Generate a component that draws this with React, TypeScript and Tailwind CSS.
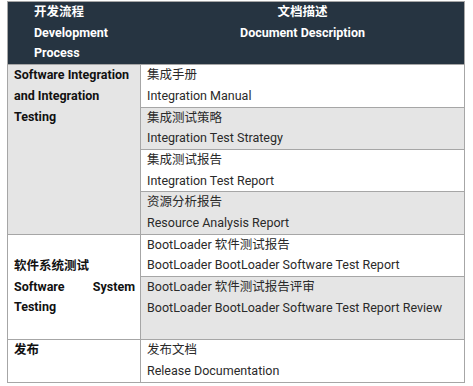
import React from 'react'

const font = { fontFamily: 'Roboto, "Noto Sans CJK SC", sans-serif' }

type Item = { zh: string; en: string; gray?: boolean; extra?: boolean }

function Sub({ item, first }: { item: Item; first: boolean }) {
  return (
    <div
      className={`px-[6px] ${first ? '' : 'border-t border-[#a6a6a6]'} ${
        item.gray ? 'bg-[#e5e5e5]' : 'bg-white'
      }`}
    >
      <p>{item.zh}</p>
      <p>{item.en}</p>
      {item.extra && <p>&nbsp;</p>}
    </div>
  )
}

function Group({
  label,
  items,
  gray,
  middle,
  justify,
}: {
  label: string[]
  items: Item[]
  gray?: boolean
  middle?: boolean
  justify?: boolean
}) {
  return (
    <div className="flex border-t border-[#a6a6a6]">
      <div
        className={`w-[133px] shrink-0 border-r border-[#a6a6a6] pl-[6px] pr-[5px] font-bold text-[#111] flex flex-col ${
          middle ? 'justify-center' : ''
        } ${gray ? 'bg-[#e5e5e5]' : 'bg-white'} ${justify ? 'text-justify' : ''}`}
      >
        {label.map((l) => (
          <p key={l}>{l}</p>
        ))}
      </div>
      <div className="flex-1 flex flex-col">
        {items.map((it, i) => (
          <Sub key={it.zh} item={it} first={i === 0} />
        ))}
      </div>
    </div>
  )
}

export default function App() {
  return (
    <div className="bg-white w-[473px] h-[386px] pt-[1px] pl-[7px]" style={font}>
      <div className="w-[458px] border border-[#a6a6a6] text-[12.5px] leading-[20.7px] text-[#2a2a2a]">
        <div className="flex bg-[#263441] text-white font-bold">
          <div className="w-[133px] shrink-0 border-r border-[#263441] pl-[26px] pr-[4px]">
            <p>开发流程</p>
            <p>Development Process</p>
          </div>
          <div className="flex-1 text-center">
            <p>文档描述</p>
            <p>Document Description</p>
          </div>
        </div>

        <Group
          gray
          label={['Software Integration and Integration Testing']}
          items={[
            { zh: '集成手册', en: 'Integration Manual' },
            { zh: '集成测试策略', en: 'Integration Test Strategy', gray: true },
            { zh: '集成测试报告', en: 'Integration Test Report' },
            { zh: '资源分析报告', en: 'Resource Analysis Report', gray: true },
          ]}
        />

        <Group
          middle
          justify
          label={['软件系统测试', 'Software System Testing']}
          items={[
            { zh: 'BootLoader 软件测试报告', en: 'BootLoader BootLoader Software Test Report' },
            {
              zh: 'BootLoader 软件测试报告评审',
              en: 'BootLoader BootLoader Software Test Report Review',
              gray: true,
              extra: true,
            },
          ]}
        />

        <Group
          label={['发布']}
          items={[{ zh: '发布文档', en: 'Release Documentation' }]}
        />
      </div>
    </div>
  )
}
